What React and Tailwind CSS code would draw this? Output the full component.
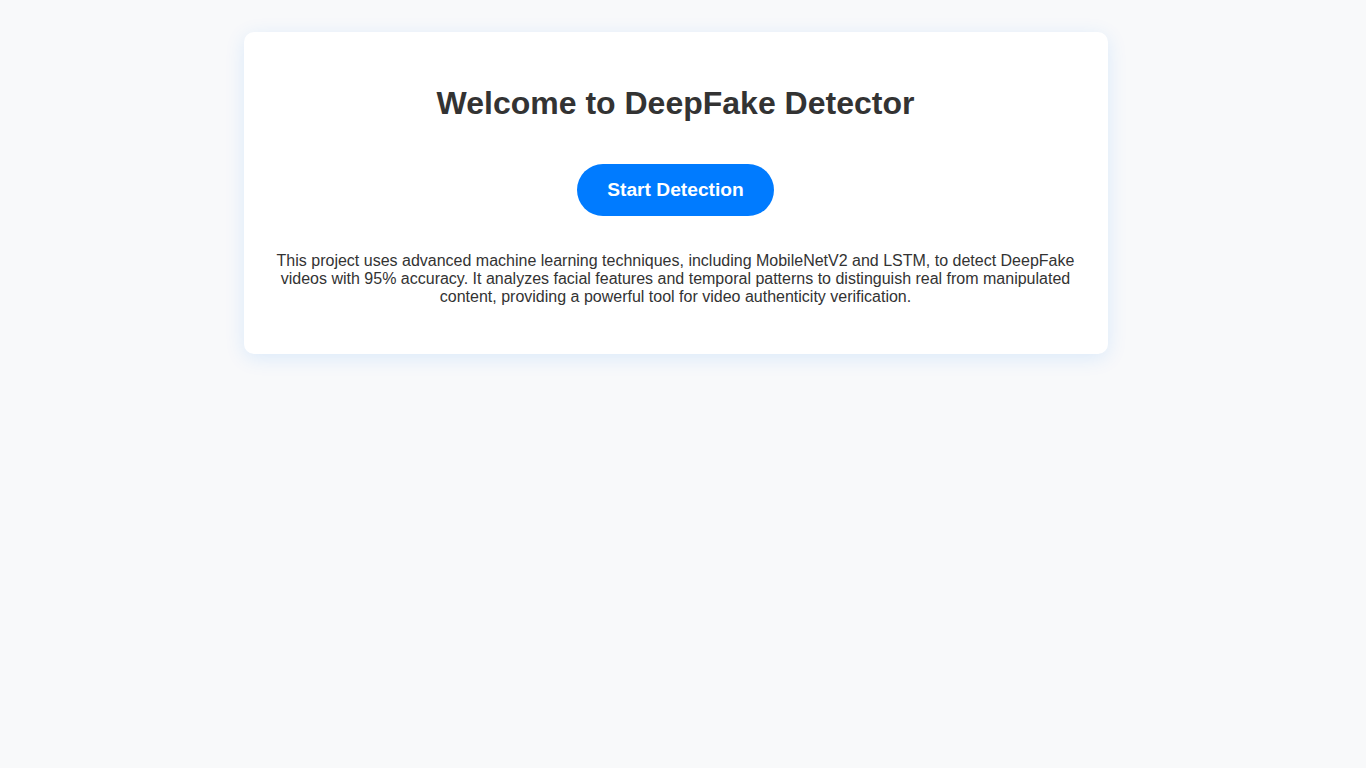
export default function App() {
  return (
    <div className="min-h-screen bg-[#f8f9fa] py-5 pl-5 pr-[35px] font-['Liberation_Sans',Arial,sans-serif] text-[#333]">
      <div className="mx-auto mt-3 w-[864px] rounded-[10px] bg-white p-8 text-center shadow-[0_4px_20px_rgba(0,123,255,0.12)]">
        <h1 className="my-[21px] text-[32px] font-bold leading-[37px]">
          Welcome to DeepFake Detector
        </h1>
        <button className="mt-[21px] mb-5 rounded-full bg-[#007bff] px-[30px] py-[15px] text-[19.2px] font-bold leading-[22px] text-white">
          Start Detection
        </button>
        <p className="mt-4 mb-4 text-[16px] leading-[18px]">
          This project uses advanced machine learning techniques, including MobileNetV2 and LSTM, to detect DeepFake
          videos with 95% accuracy. It analyzes facial features and temporal patterns to distinguish real from manipulated
          content, providing a powerful tool for video authenticity verification.
        </p>
      </div>
    </div>
  );
}
